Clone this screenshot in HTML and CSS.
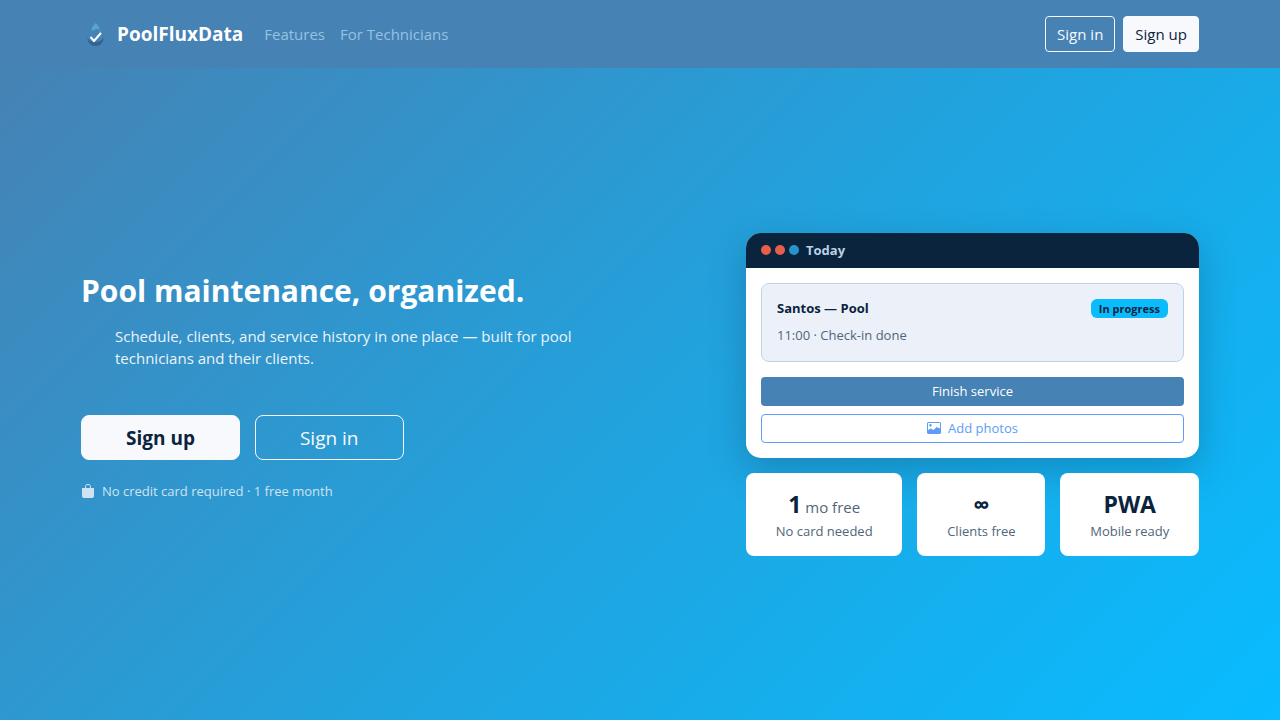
FILE: index.html
```html
<!DOCTYPE html>
<html lang="en">
<head>
  <meta charset="UTF-8">
  <meta name="viewport" content="width=device-width, initial-scale=1">
  <title>PoolFluxData</title>
  <link rel="stylesheet" href="styles.css">
</head>
<body>

  <header class="navbar">
    <div class="container navbar-inner">
      <a href="/" class="brand">
        <svg class="brand-logo" width="28" height="28" viewBox="0 0 28 28" aria-hidden="true">
          <path d="M14.500 3c1.800 1.700 3.600 3.800 4.200 6.500l-3.200-.8-3.500 2-1.800-.5c.8-2.600 2.600-5.500 4.300-7.200z" fill="#56a5d6"/>
          <path d="M18.500 9.500c1 1 1.700 2 2 3.500l-2 1z" fill="#4f9acb"/>
          <path d="M6.500 17.500c2 4 5 4.500 8 4.500s6-1.500 8-4c.3 4.500-3.500 8-8 8s-8-3.500-8-8.500z" fill="#2f6590"/>
          <path d="M9.500 17l3.500 4 7-8" fill="none" stroke="#fff" stroke-width="2"/>
        </svg>
        PoolFluxData
      </a>
      <nav class="nav-links">
        <a href="#features">Features</a>
        <a href="#technicians">For Technicians</a>
      </nav>
      <div class="nav-actions">
        <button type="button" class="btn btn-outline-light">Sign in</button>
        <button type="button" class="btn btn-light">Sign up</button>
      </div>
    </div>
  </header>

  <main class="hero">
    <div class="container hero-grid">
      <section class="hero-text">
        <h1>Pool maintenance, organized.</h1>
        <p class="lead">Schedule, clients, and service history in one place — built for pool technicians and their clients.</p>
        <div class="hero-actions">
          <button type="button" class="btn btn-light btn-lg btn-bold">Sign up</button>
          <button type="button" class="btn btn-outline-light btn-lg">Sign in</button>
        </div>
        <p class="hero-note">
          <svg width="14" height="14" viewBox="0 0 14 14" aria-hidden="true">
            <path d="M4.500 4V2.800a2.500 2.500 0 0 1 5 0V4" fill="none" stroke="currentColor"/>
            <path d="M1 4h12v8a2 2 0 0 1-2 2H3a2 2 0 0 1-2-2z" fill="currentColor"/>
          </svg>
          No credit card required · 1 free month
        </p>
      </section>

      <section class="hero-preview">
        <div class="app-card">
          <div class="app-header">
            <span class="dot"></span>
            <span class="dot"></span>
            <span class="dot dot-blue"></span>
            <span class="app-title">Today</span>
          </div>
          <div class="app-body">
            <div class="job">
              <div class="job-top">
                <strong>Santos — Pool</strong>
                <span class="badge">In progress</span>
              </div>
              <p>11:00 · Check-in done</p>
            </div>
            <button type="button" class="btn btn-sm btn-primary">Finish service</button>
            <button type="button" class="btn btn-sm btn-outline-primary">
              <svg width="14" height="12" viewBox="0 0 14 12" aria-hidden="true">
                <path fill-rule="evenodd" fill="currentColor" d="M1.500 0h11A1.500 1.500 0 0 1 14 1.500v9a1.500 1.500 0 0 1-1.500 1.500h-11A1.500 1.500 0 0 1 0 10.500v-9A1.500 1.500 0 0 1 1.500 0zM1 1v7l3-1.500 2.500 1.500L9.500 5 13 6.500V1zM3.500 2a1.300 1.300 0 1 1 0 2.600 1.300 1.300 0 0 1 0-2.600z"/>
              </svg>
              Add photos
            </button>
          </div>
        </div>

        <div class="stats">
          <div class="stat">
            <div class="stat-value">1<small> mo free</small></div>
            <div class="stat-label">No card needed</div>
          </div>
          <div class="stat">
            <div class="stat-value">∞</div>
            <div class="stat-label">Clients free</div>
          </div>
          <div class="stat">
            <div class="stat-value">PWA</div>
            <div class="stat-label">Mobile ready</div>
          </div>
        </div>
      </section>
    </div>
  </main>

</body>
</html>
```

FILE: styles.css
```css
* {
  box-sizing: border-box;
  margin: 0;
  padding: 0;
}

body {
  display: flex;
  flex-direction: column;
  min-height: 100vh;
  font-family: "Open Sans", sans-serif;
  font-size: 15px;
  line-height: 22px;
  color: #0a243d;
}

a {
  text-decoration: none;
}

.container {
  width: 100%;
  max-width: 1140px;
  margin: 0 auto;
  padding: 0 11px;
}

/* Navbar */
.navbar {
  background: #4682b4;
  padding: 16px 0;
}

.navbar-inner {
  display: flex;
  align-items: center;
}

.brand {
  display: flex;
  align-items: center;
  gap: 8px;
  color: #fff;
  font-size: 19px;
  font-weight: bold;
}

.nav-links {
  display: flex;
  gap: 15px;
  margin-left: 21px;
}

.nav-links a {
  color: #94c2e3;
}

.nav-actions {
  display: flex;
  gap: 8px;
  margin-left: auto;
}

/* Buttons */
.btn {
  height: 36px;
  padding: 0 11px;
  border: 1px solid transparent;
  border-radius: 4px;
  font-family: inherit;
  font-size: 15px;
  cursor: pointer;
}

.btn-light {
  background: #f8f9fc;
  border-color: #f8f9fc;
  color: #0a243d;
}

.btn-outline-light {
  background: transparent;
  border-color: #f8f9fc;
  color: #f8f9fc;
}

.btn-lg {
  height: 45px;
  padding: 0 44px;
  border-radius: 8px;
  font-size: 19px;
}

.btn-bold {
  font-weight: bold;
}

.btn-sm {
  display: flex;
  align-items: center;
  justify-content: center;
  gap: 7px;
  width: 100%;
  height: 29px;
  font-size: 13px;
}

.btn-primary {
  background: #4682b4;
  color: #fff;
}

.btn-outline-primary {
  background: #fff;
  border-color: #5e9cf8;
  color: #5e9cf8;
}

/* Hero */
.hero {
  flex: 1;
  display: flex;
  align-items: center;
  background: linear-gradient(135deg, #4682b4, #22a2dd 50%, #08bcff);
}

.hero-grid {
  display: grid;
  grid-template-columns: 1fr 1fr;
  gap: 22px;
  align-items: center;
}

.hero-text h1 {
  margin-bottom: 16px;
  font-size: 30px;
  line-height: 36px;
  color: #fff;
}

.lead {
  max-width: 480px;
  margin: 0 auto 46px;
  color: #edf4fa;
}

.hero-actions {
  display: flex;
  gap: 15px;
  margin-bottom: 20px;
}

.hero-note {
  display: flex;
  align-items: center;
  gap: 7px;
  margin-bottom: 13px;
  font-size: 13px;
  color: #cfe3f2;
}

/* Preview card */
.hero-preview {
  width: 100%;
  max-width: 453px;
  justify-self: end;
}

.app-card {
  margin-bottom: 15px;
  border-radius: 15px;
  background: #fff;
  overflow: hidden;
  box-shadow: 0 12px 36px rgba(10, 36, 61, 0.25);
}

.app-header {
  display: flex;
  align-items: center;
  gap: 4px;
  height: 35px;
  padding: 0 15px;
  background: #0a243d;
}

.dot {
  width: 10px;
  height: 10px;
  border-radius: 50%;
  background: #e85d4c;
}

.dot-blue {
  background: #2693cc;
}

.app-title {
  margin-left: 3px;
  font-size: 13px;
  font-weight: bold;
  color: #b9d2e6;
}

.app-body {
  display: flex;
  flex-direction: column;
  gap: 8px;
  padding: 15px;
}

.job {
  margin-bottom: 7px;
  padding: 15px;
  border: 1px solid #bcd4e6;
  border-radius: 8px;
  background: #ecf1f9;
  font-size: 13px;
}

.job-top {
  display: flex;
  align-items: center;
  justify-content: space-between;
  height: 19px;
  margin-bottom: 6px;
}

.job p {
  color: #50667a;
}

.badge {
  padding: 0 8px;
  border-radius: 6px;
  background: #0bbcfd;
  font-size: 11px;
  font-weight: bold;
  line-height: 19px;
}

/* Stats */
.stats {
  display: flex;
  gap: 15px;
}

.stat {
  flex: 1 1 auto;
  padding: 15px;
  border-radius: 8px;
  background: #fff;
  text-align: center;
}

.stat-value {
  font-size: 23px;
  font-weight: bold;
  line-height: 33px;
}

.stat-value small {
  font-size: 15px;
  font-weight: normal;
  line-height: 15px;
  color: #50667a;
}

.stat-label {
  font-size: 13px;
  line-height: 20px;
  color: #50667a;
}
```
